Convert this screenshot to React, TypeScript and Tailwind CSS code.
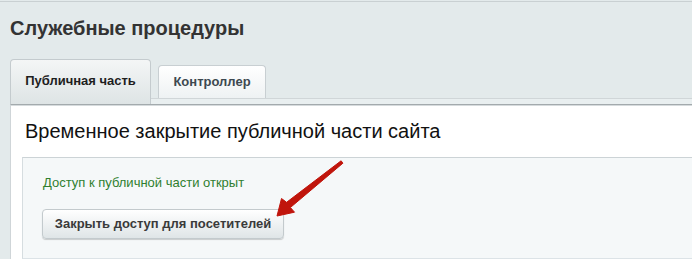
import React from "react";

export default function App() {
  const font = { fontFamily: '"Liberation Sans", Arial, sans-serif' };
  return (
    <div
      className="relative w-[692px] h-[259px] overflow-hidden bg-[#e3eaeb]"
      style={font}
    >
      <div className="h-px" />
      <div className="border-t border-[#c9d0d2]" />
      <div className="pl-[10px] pt-[14px] h-[57px]">
        <h1 className="text-[20px] leading-[24px] font-bold text-[#333333]">
          Служебные процедуры
        </h1>
      </div>
      {/* tabs */}
      <div className="flex items-end pl-[10px]">
        <div className="w-[141px] h-[45px] rounded-t-[4px] border border-b-0 border-[#c4cbce] bg-gradient-to-b from-[#f4f6f6] to-[#dee4e5] flex items-center justify-center pb-[3px]">
          <span className="text-[13px] font-bold text-[#1e1e1e]">Публичная часть</span>
        </div>
        <div className="flex-1 flex flex-col">
          <div className="pl-[7px]">
            <div className="w-[108px] h-[33px] rounded-t-[4px] border border-b-0 border-[#c8cfd2] bg-gradient-to-b from-[#ffffff] to-[#eef2f3] flex items-center justify-center">
              <span className="text-[13px] font-bold text-[#3d4850]">Контроллер</span>
            </div>
          </div>
          <div className="h-[6px] border-t border-[#d0d6d8] bg-[#e9eff0]" />
        </div>
      </div>
      {/* white panel */}
      <div className="ml-[10px] bg-white border-l border-t border-l-[#cfd5d8] border-t-[#a3aaad] shadow-[inset_0_1px_0_#d6dbdd] h-[200px]">
        <div className="pl-[14px] pt-[14px] pb-[14px]">
          <h2 className="text-[20px] leading-[24px] text-[#111111]">
            Временное закрытие публичной части сайта
          </h2>
        </div>
        <div className="ml-[11px] bg-[#f5f8f9] border-l border-t border-b border-l-[#d6dde0] border-t-[#ccd3d6] border-b-[#dce3e7] h-[102px] pl-[20px] pt-[17px]">
          <div className="text-[13px] leading-[16px] text-[#2f7f2f]">
            Доступ к публичной части открыт
          </div>
          <button
            className="mt-[18px] ml-[-1px] w-[242px] h-[30px] rounded-[4px] border border-[#c3cacd] bg-gradient-to-b from-[#ffffff] to-[#dfe5e7] shadow-[0_1px_1px_rgba(0,0,0,0.18)] text-[13px] font-bold text-[#3a3a3a] flex items-center justify-center"
            style={font}
          >
            Закрыть доступ для посетителей
          </button>
        </div>
      </div>
      {/* red arrow overlay */}
      <svg
        className="absolute left-0 top-0 pointer-events-none"
        width="692"
        height="259"
        viewBox="0 0 692 259"
      >
        <polygon
          points="342.9,163.2 290.4,207.5 294.5,212.2 277,216 281.5,198.5 286.6,202.3 341.1,160.8"
          fill="#c0150c"
          stroke="#c0150c"
          strokeWidth="1"
          strokeLinejoin="round"
        />
      </svg>
    </div>
  );
}
